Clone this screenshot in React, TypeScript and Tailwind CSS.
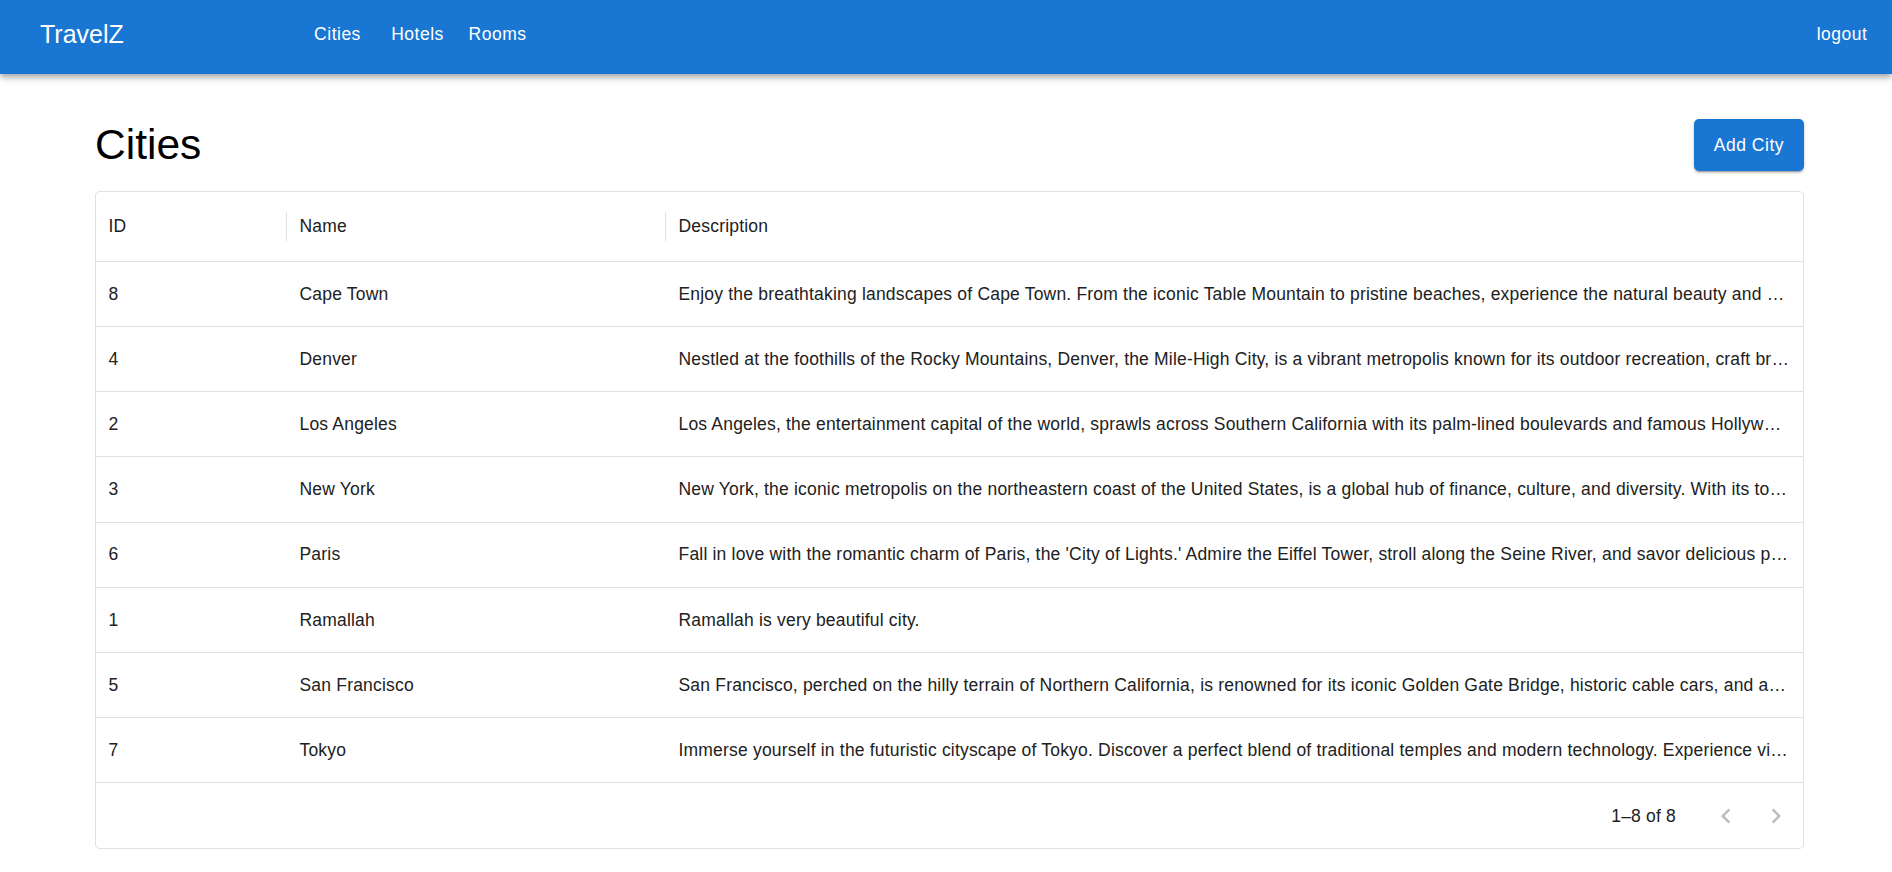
import React from "react";

type City = { id: number; name: string; description: string };

const cities: City[] = [
  {
    id: 8,
    name: "Cape Town",
    description:
      "Enjoy the breathtaking landscapes of Cape Town. From the iconic Table Mountain to pristine beaches, experience the natural beauty and vibrant culture of this South African gem.",
  },
  {
    id: 4,
    name: "Denver",
    description:
      "Nestled at the foothills of the Rocky Mountains, Denver, the Mile-High City, is a vibrant metropolis known for its outdoor recreation, craft breweries, and thriving arts scene.",
  },
  {
    id: 2,
    name: "Los Angeles",
    description:
      "Los Angeles, the entertainment capital of the world, sprawls across Southern California with its palm-lined boulevards and famous Hollywood sign, beaches and studios.",
  },
  {
    id: 3,
    name: "New York",
    description:
      "New York, the iconic metropolis on the northeastern coast of the United States, is a global hub of finance, culture, and diversity. With its towering skyscrapers and bustling streets.",
  },
  {
    id: 6,
    name: "Paris",
    description:
      "Fall in love with the romantic charm of Paris, the 'City of Lights.' Admire the Eiffel Tower, stroll along the Seine River, and savor delicious pastries in charming cafés.",
  },
  { id: 1, name: "Ramallah", description: "Ramallah is very beautiful city." },
  {
    id: 5,
    name: "San Francisco",
    description:
      "San Francisco, perched on the hilly terrain of Northern California, is renowned for its iconic Golden Gate Bridge, historic cable cars, and a diverse food scene.",
  },
  {
    id: 7,
    name: "Tokyo",
    description:
      "Immerse yourself in the futuristic cityscape of Tokyo. Discover a perfect blend of traditional temples and modern technology. Experience vibrant neighborhoods and cuisine.",
  },
];

function ChevronLeft() {
  return (
    <svg viewBox="0 0 24 24" className="w-[30px] h-[30px] fill-[#bdbdbd]">
      <path d="M15.41 16.59L10.83 12l4.58-4.59L14 6l-6 6 6 6 1.41-1.41z" />
    </svg>
  );
}

function ChevronRight() {
  return (
    <svg viewBox="0 0 24 24" className="w-[30px] h-[30px] fill-[#bdbdbd]">
      <path d="M8.59 16.59L13.17 12 8.59 7.41 10 6l6 6-6 6-1.41-1.41z" />
    </svg>
  );
}

export default function App() {
  return (
    <div className="min-h-screen bg-white font-['Liberation_Sans',Arial,sans-serif] text-[#212121]">
      {/* App bar */}
      <header className="relative z-10 h-[74px] bg-[#1976d2] text-white flex items-center pl-[40px] pr-[10px] pb-[6px] shadow-[0_2.5px_5px_-1px_rgba(0,0,0,0.2),0_5px_6px_0_rgba(0,0,0,0.14),0_1px_12px_0_rgba(0,0,0,0.12)]">
        <div className="w-[257.5px] text-[25px] leading-[30px]">TravelZ</div>
        <nav className="flex">
          {["Cities", "Hotels", "Rooms"].map((item) => (
            <button
              key={item}
              className="w-[80px] h-[45px] text-[17.5px] tracking-[0.5px] leading-[30px] text-white"
            >
              {item}
            </button>
          ))}
        </nav>
        <button className="ml-auto w-[80px] h-[45px] text-[17.5px] tracking-[0.5px] leading-[30px] text-white">
          logout
        </button>
      </header>

      <main className="pl-[95px] pr-[88px]">
        <div className="mt-[45px] flex items-center justify-between h-[52px]">
          <h1 className="text-[42.5px] leading-[52px] text-black">Cities</h1>
          <button className="h-[52px] px-[20px] rounded-[5px] bg-[#1976d2] text-white text-[17.5px] tracking-[0.5px] shadow-[0_3px_1px_-2px_rgba(0,0,0,0.2),0_2px_2px_0_rgba(0,0,0,0.14),0_1px_5px_0_rgba(0,0,0,0.12)]">
            Add City
          </button>
        </div>

        <div className="mt-[20px] border border-[#e0e0e0] rounded-[5px] text-[17.5px] tracking-[0.19px]">
          {/* Column headers */}
          <div className="h-[70px] flex items-center border-b border-[#e0e0e0]">
            <div className="w-[190px] px-[12.5px]">ID</div>
            <div className="w-px h-[29px] bg-[#e0e0e0]" />
            <div className="w-[378px] px-[12.5px]">Name</div>
            <div className="w-px h-[29px] bg-[#e0e0e0]" />
            <div className="flex-1 px-[12.5px]">Description</div>
          </div>

          {/* Rows */}
          {cities.map((c) => (
            <div
              key={c.id}
              className="h-[65.125px] flex items-center border-b border-[#e0e0e0]"
            >
              <div className="w-[191px] shrink-0 px-[12.5px]">{c.id}</div>
              <div className="w-[379px] shrink-0 px-[12.5px]">{c.name}</div>
              <div className="flex-1 min-w-0 px-[12.5px] truncate">
                {c.description}
              </div>
            </div>
          ))}

          {/* Footer */}
          <div className="h-[65px] flex items-center justify-end pr-[2px]">
            <span className="leading-[24px]">1–8 of 8</span>
            <div className="ml-[25px] flex">
              <button className="w-[50px] h-[50px] flex items-center justify-center">
                <ChevronLeft />
              </button>
              <button className="w-[50px] h-[50px] flex items-center justify-center">
                <ChevronRight />
              </button>
            </div>
          </div>
        </div>
      </main>
    </div>
  );
}
